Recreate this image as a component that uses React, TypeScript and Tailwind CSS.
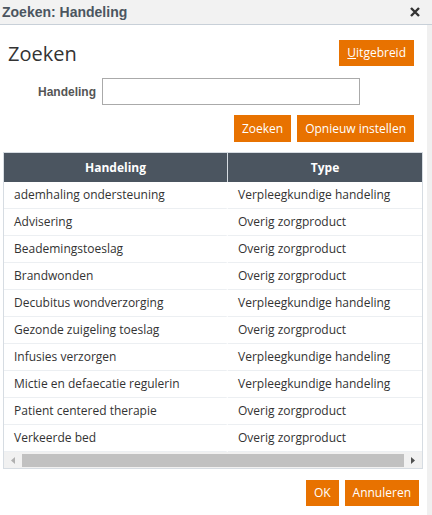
import React from "react";

const rows: [string, string][] = [
  ["ademhaling ondersteuning", "Verpleegkundige handeling"],
  ["Advisering", "Overig zorgproduct"],
  ["Beademingstoeslag", "Overig zorgproduct"],
  ["Brandwonden", "Overig zorgproduct"],
  ["Decubitus wondverzorging", "Verpleegkundige handeling"],
  ["Gezonde zuigeling toeslag", "Overig zorgproduct"],
  ["Infusies verzorgen", "Verpleegkundige handeling"],
  ["Mictie en defaecatie regulerin", "Verpleegkundige handeling"],
  ["Patient centered therapie", "Overig zorgproduct"],
  ["Verkeerde bed", "Overig zorgproduct"],
];

const btn =
  "bg-[#e87200] text-white text-[12px] h-[26px] px-[8px] flex items-center font-['Open_Sans',sans-serif]";

export default function App() {
  return (
    <div className="w-[432px] h-[515px] flex flex-col bg-white font-['Open_Sans',sans-serif] overflow-hidden">
      {/* Title bar */}
      <div className="h-[25px] shrink-0 bg-[#f2f2f2] border-b border-[#c8d0d8] flex items-center justify-between pl-[2px] pr-[12px]">
        <span className="font-['Liberation_Sans',sans-serif] font-bold text-[14px] text-[#4b5560]">
          Zoeken: Handeling
        </span>
        <svg width="10" height="10" viewBox="0 0 10 10">
          <path d="M1 1L9 9M9 1L1 9" stroke="#333" strokeWidth="2.4" />
        </svg>
      </div>

      <div className="flex flex-1">
        <div className="flex-1 flex flex-col">
          {/* Header */}
          <div className="flex justify-between items-start pl-[8px] pr-[13px] pt-[15px]">
            <h1 className="text-[20px] text-[#333] leading-[26px] mt-[1px]">Zoeken</h1>
            <button className={btn + " px-[7px]"}>
              <span className="underline">U</span>itgebreid
            </button>
          </div>

          {/* Search field */}
          <div className="flex items-center mt-[11px] pl-[38px]">
            <label className="font-['Liberation_Sans',sans-serif] font-bold text-[12px] text-[#555] mr-[6px]">
              Handeling
            </label>
            <input className="w-[258px] h-[27px] border border-[#aaa] outline-none" />
          </div>

          <div className="flex justify-end gap-[6px] mt-[10px] pr-[13px]">
            <button className={btn + " h-[27px]"}>Zoeken</button>
            <button className={btn + " h-[27px]"}>Opnieuw instellen</button>
          </div>

          {/* Table */}
          <div className="mt-[10px] ml-[3px] mr-[4px] border border-[#d6dce2]">
            <table className="w-full border-separate border-spacing-0 text-[12px]">
              <thead>
                <tr className="bg-[#4b5560] text-white">
                  <th className="h-[29px] w-[224px] font-bold border-r border-[#d6dce2]">Handeling</th>
                  <th className="h-[29px] font-bold">Type</th>
                </tr>
              </thead>
              <tbody>
                {rows.map(([a, b], i) => (
                  <tr key={i}>
                    <td className="h-[27px] pl-[10px] text-[#333] border-b border-r-2 border-b-[#eceff2] border-r-white whitespace-nowrap">
                      {a}
                    </td>
                    <td className="h-[27px] pl-[10px] text-[#333] border-b border-[#eceff2] whitespace-nowrap">
                      {b}
                    </td>
                  </tr>
                ))}
              </tbody>
            </table>
            {/* Horizontal scrollbar */}
            <div className="h-[16px] bg-[#f1f1f1] flex items-center">
              <div className="w-[18px] flex justify-center">
                <svg width="4" height="7" viewBox="0 0 4 7">
                  <path d="M4 0L0 3.5L4 7Z" fill="#b0b0b0" />
                </svg>
              </div>
              <div className="flex-1 h-[13px] bg-[#c1c1c1]" />
              <div className="w-[18px] flex justify-center">
                <svg width="4" height="7" viewBox="0 0 4 7">
                  <path d="M0 0L4 3.5L0 7Z" fill="#505050" />
                </svg>
              </div>
            </div>
          </div>

          {/* Footer */}
          <div className="flex justify-end gap-[6px] mt-[11px] pr-[8px]">
            <button className={btn}>OK</button>
            <button className={btn}>Annuleren</button>
          </div>
        </div>
        <div className="w-[5px] bg-[#f0f0f0]" />
      </div>
    </div>
  );
}
